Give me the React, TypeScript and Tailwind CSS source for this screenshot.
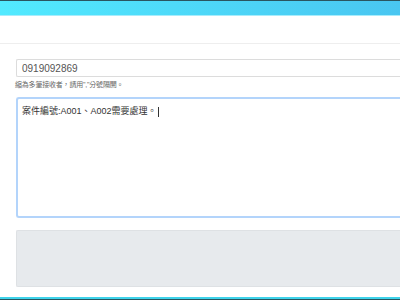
export default function App() {
  return (
    <div
      className="w-[400px] h-[300px] overflow-hidden bg-white flex flex-col"
      style={{ fontFamily: '"Liberation Sans", "Noto Sans CJK TC", sans-serif' }}
    >
      <div className="shrink-0 h-[1px] bg-[#2a5560]" />
      <div className="shrink-0 h-[14px] bg-gradient-to-r from-[#52eaff] to-[#49c6f1]" />
      <div className="shrink-0 h-[1px] bg-[#a8ecfb]" />

      <div className="shrink-0 h-[28px] border-b border-[#eeeeee]" />

      <div className="shrink-0 flex flex-col pl-[16px] pt-[15px]">
        <div className="shrink-0 h-[18px] border border-[#dcdcdc] rounded-l-[2px] border-r-0 flex items-center pl-[5px] text-[10px] text-[#555]">
          0919092869
        </div>
        <div className="shrink-0 mt-[2px] -ml-[1px] text-[7px] text-[#666] leading-[12px] tracking-[-0.2px]">
          縮為多筆接收者，請用","分號隔開。
        </div>
        <div className="shrink-0 mt-[6px] h-[121px] border-[2px] border-r-0 border-[#b3d4fb] rounded-l-[3px] pl-[4px] pt-[6px] text-[9px] text-[#333] leading-[12px]">
          案件編號:A001、A002需要處理。<span className="inline-block w-[1px] h-[10px] bg-[#333] align-middle ml-[1px]" />
        </div>
        <div className="shrink-0 mt-[12px] h-[57px] bg-[#e7eaed] border border-[#dee1e4] border-r-0 rounded-l-[2px]" />
      </div>

      <div className="shrink-0 h-[2px] mt-[10px] bg-[#3fd3ea]" />
      <div className="shrink-0 h-[1px] bg-[#2a5560]" />
    </div>
  );
}
